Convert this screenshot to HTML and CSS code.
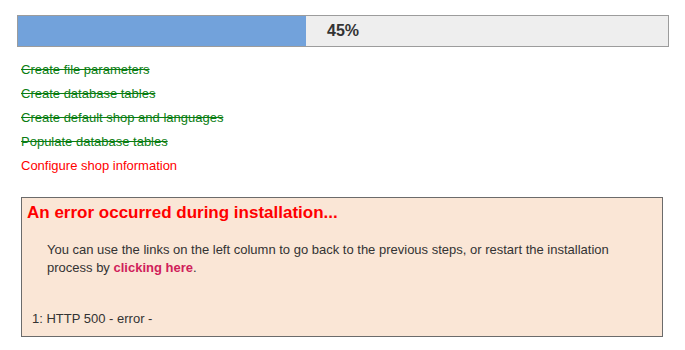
FILE: index.html
```html
<!DOCTYPE html>
<html>
  <head>
    <meta charset="UTF-8">
    <title>Installation</title>
    <link rel="stylesheet" href="styles.css">
  </head>
  <body>
    <div class="install-wrap">
      <div class="progress">
        <div class="progress-fill"></div>
        <div class="progress-label">45%</div>
      </div>

      <ul class="steps">
        <li class="done">Create file parameters</li>
        <li class="done">Create database tables</li>
        <li class="done">Create default shop and languages</li>
        <li class="done">Populate database tables</li>
        <li class="failed">Configure shop information</li>
      </ul>

      <div class="error-box">
        <h3>An error occurred during installation...</h3>
        <p class="error-text">You can use the links on the left column to go back to the previous steps, or restart the installation process by <a href="#">clicking here</a>.</p>
        <p class="error-detail">1: HTTP 500 - error -</p>
      </div>
    </div>
  </body>
</html>
```

FILE: styles.css
```css
html,body {
  margin:0;
  padding:0;
  background:#fff;
  font-family:'Liberation Sans', Arial, sans-serif;
  color:#333;
}

.install-wrap {
  padding:15px 0 0 17px;
}

.progress {
  display:flex;
  box-sizing:border-box;
  width:652px;
  height:32px;
  border:1px solid #9c9c9c;
  background:#eee;
}
.progress-fill {
  width:288px;
  background:#72a2db;
}
.progress-label {
  padding-left:21px;
  font-size:16px;
  font-weight:bold;
  line-height:30px;
  color:#333;
}

.steps {
  list-style:none;
  margin:11px 0 0 4px;
  padding:0;
  font-size:13px;
  line-height:24px;
}
.steps li.done {
  color:#0a7d12;
  text-decoration:line-through;
}
.steps li.failed { color:#f00; }

.error-box {
  box-sizing:border-box;
  width:642px;
  margin:19px 0 0 4px;
  padding:5px 0 8px 0;
  border:1px solid #6b6b6b;
  background:#fae6d6;
}
.error-box h3 {
  margin:0;
  padding-left:5px;
  font-size:17px;
  line-height:20px;
  color:#f00;
}
.error-text {
  margin:18px 0 0 0;
  padding:0 25px 0 25px;
  font-size:13px;
  line-height:18px;
}
.error-text a {
  color:#d0205a;
  font-weight:bold;
  text-decoration:none;
}
.error-detail {
  margin:33px 0 0 0;
  padding-left:10px;
  font-size:13px;
  line-height:18px;
}
```
